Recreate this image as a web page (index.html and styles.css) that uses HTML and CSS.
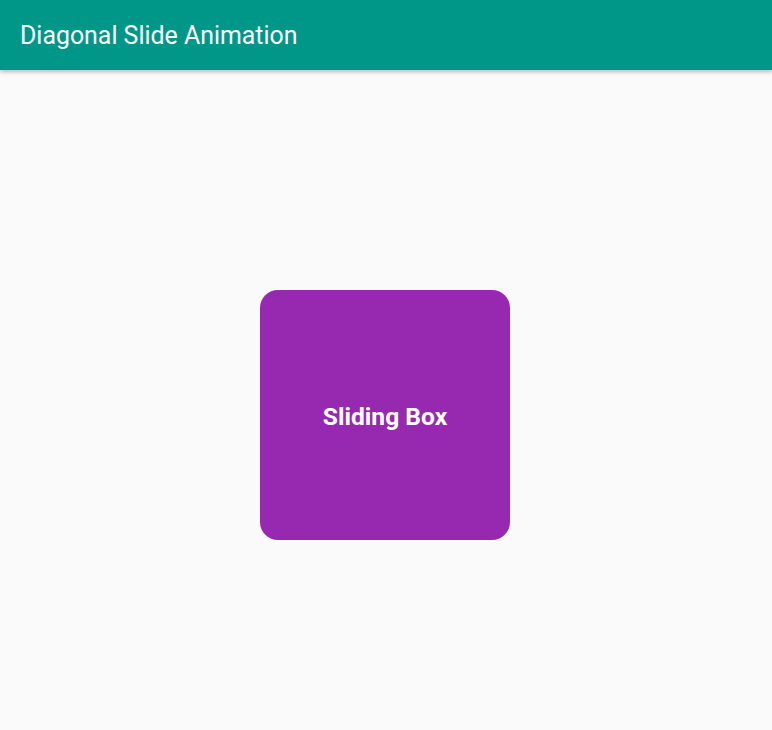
FILE: index.html
```html
<!DOCTYPE html>
<html>
<head>
<meta charset="utf-8">
<link rel="stylesheet" href="styles.css">
</head>
<body>
<header class="appbar"><h1 class="title">Diagonal Slide Animation</h1></header>
<main class="content">
  <div class="box"><span class="box-label">Sliding Box</span></div>
</main>
</body>
</html>
```
FILE: styles.css
```css
html, body {
  margin: 0;
  padding: 0;
  height: 100%;
}
body {
  background: #fafafa;
  font-family: Roboto, "Noto Sans", sans-serif;
  display: flex;
  flex-direction: column;
}
.appbar {
  height: 70px;
  background: #009688;
  display: flex;
  align-items: center;
  padding: 0 20px;
  box-shadow: 0 2px 4px rgba(0,0,0,0.25);
  position: relative;
  z-index: 1;
  flex-shrink: 0;
}
.title {
  margin: 0;
  color: #fff;
  font-size: 24.9px;
  font-weight: 400;
}
.content {
  flex: 1;
  display: flex;
  align-items: center;
  justify-content: center;
  padding-top: 30px;
  padding-right: 2px;
}
.box {
  width: 250px;
  height: 250px;
  background: #9729b0;
  border-radius: 18px;
  display: flex;
  align-items: center;
  justify-content: center;
}
.box-label {
  color: #fff;
  font-size: 24.6px;
  font-weight: 700;
  padding-top: 2px;
}
```
